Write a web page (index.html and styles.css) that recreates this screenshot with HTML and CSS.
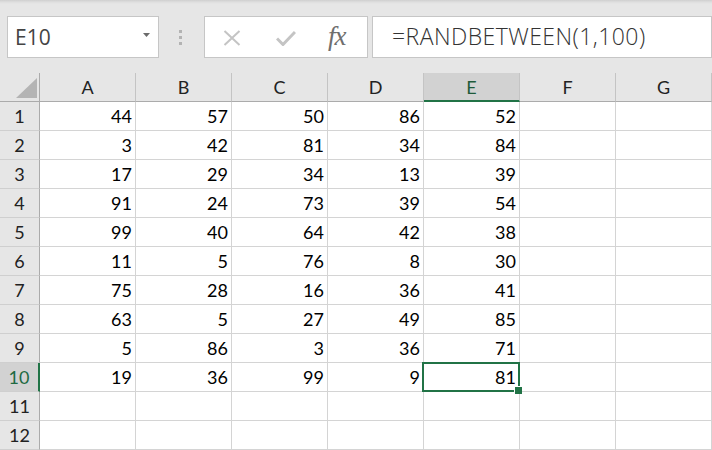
FILE: index.html
```html
<!DOCTYPE html>
<html>
<head>
<meta charset="utf-8">
<link rel="stylesheet" href="styles.css">
</head>
<body>
<div class="app">
  <div class="toolbar">
    <div class="namebox">
      <span class="name">E10</span>
      <svg class="caret" width="7" height="4" viewBox="0 0 7 4"><path d="M0 0H7L3.5 4Z" fill="#6b6b6b"/></svg>
    </div>
    <div class="grip"><i></i><i></i><i></i></div>
    <div class="fbtns">
      <svg class="ico-x" width="18" height="16" viewBox="0 0 18 16"><path d="M1.5 1L16.5 15M16.5 1L1.5 15" stroke="#c4c4c4" stroke-width="2" fill="none"/></svg>
      <svg class="ico-ok" width="20" height="16" viewBox="0 0 20 16"><path d="M1 8.5L7 14.5L19 2" stroke="#c4c4c4" stroke-width="3" fill="none"/></svg>
      <span class="fx">fx</span>
    </div>
    <div class="formula">=RANDBETWEEN(1,100)</div>
  </div>
  <div class="sheet">
    <div class="corner"><svg width="21" height="20" viewBox="0 0 21 20"><path d="M21 0V20H0Z" fill="#b4b4b4"/></svg></div>
    <div class="ch">A</div><div class="ch">B</div><div class="ch">C</div><div class="ch">D</div><div class="ch sel">E</div><div class="ch">F</div><div class="ch">G</div>

    <div class="rh">1</div><div class="c">44</div><div class="c">57</div><div class="c">50</div><div class="c">86</div><div class="c">52</div><div class="c"></div><div class="c"></div>
    <div class="rh">2</div><div class="c">3</div><div class="c">42</div><div class="c">81</div><div class="c">34</div><div class="c">84</div><div class="c"></div><div class="c"></div>
    <div class="rh">3</div><div class="c">17</div><div class="c">29</div><div class="c">34</div><div class="c">13</div><div class="c">39</div><div class="c"></div><div class="c"></div>
    <div class="rh">4</div><div class="c">91</div><div class="c">24</div><div class="c">73</div><div class="c">39</div><div class="c">54</div><div class="c"></div><div class="c"></div>
    <div class="rh">5</div><div class="c">99</div><div class="c">40</div><div class="c">64</div><div class="c">42</div><div class="c">38</div><div class="c"></div><div class="c"></div>
    <div class="rh">6</div><div class="c">11</div><div class="c">5</div><div class="c">76</div><div class="c">8</div><div class="c">30</div><div class="c"></div><div class="c"></div>
    <div class="rh">7</div><div class="c">75</div><div class="c">28</div><div class="c">16</div><div class="c">36</div><div class="c">41</div><div class="c"></div><div class="c"></div>
    <div class="rh">8</div><div class="c">63</div><div class="c">5</div><div class="c">27</div><div class="c">49</div><div class="c">85</div><div class="c"></div><div class="c"></div>
    <div class="rh">9</div><div class="c">5</div><div class="c">86</div><div class="c">3</div><div class="c">36</div><div class="c">71</div><div class="c"></div><div class="c"></div>
    <div class="rh sel">10</div><div class="c">19</div><div class="c">36</div><div class="c">99</div><div class="c">9</div><div class="c active">81</div><div class="c"></div><div class="c"></div>
    <div class="rh">11</div><div class="c"></div><div class="c"></div><div class="c"></div><div class="c"></div><div class="c"></div><div class="c"></div><div class="c"></div>
    <div class="rh">12</div><div class="c"></div><div class="c"></div><div class="c"></div><div class="c"></div><div class="c"></div><div class="c"></div><div class="c"></div>
  </div>
</div>
</body>
</html>
```

FILE: styles.css
```css
* { box-sizing: border-box; }
html, body { margin: 0; padding: 0; }
body {
  width: 712px;
  height: 450px;
  overflow: hidden;
  background: #ffffff;
  font-family: "Lato", "Liberation Sans", sans-serif;
}
.app { width: 712px; }

.toolbar {
  height: 73px;
  display: flex;
  align-items: flex-start;
  padding: 16px 0 0 7px;
  background: linear-gradient(#cfcfcf 0, #dedede 2px, #e6e6e6 4px, #e6e6e6 100%);
}
.namebox {
  width: 152px;
  height: 42px;
  background: #fff;
  border: 1px solid #c6c6c6;
  display: flex;
  align-items: center;
  justify-content: space-between;
  padding: 0 8px 0 7px;
}
.name {
  font-family: "Open Sans", "Noto Sans", sans-serif;
  font-size: 21px;
  color: #444;
  line-height: 40px;
}
.caret { margin-top: -4px; }
.grip {
  width: 3px;
  margin: 14px 22px 0 20px;
  display: flex;
  flex-direction: column;
  gap: 3px;
}
.grip i {
  display: block;
  width: 3px;
  height: 3px;
  background: #b3b3b3;
}
.fbtns {
  width: 164px;
  height: 42px;
  background: #fff;
  border: 1px solid #c6c6c6;
  display: flex;
  align-items: center;
  padding-left: 18px;
}
.ico-x { margin-right: 35px; margin-top: 2px; }
.ico-ok { margin-right: 32px; margin-top: 2px; }
.fx {
  font-family: "Liberation Serif", serif;
  font-style: italic;
  font-size: 27px;
  color: #6f6f6f;
  letter-spacing: -1px;
  line-height: 40px;
  margin-top: -2px;
}
.formula {
  flex: 1;
  height: 42px;
  margin-left: 4px;
  background: #fff;
  border: 1px solid #c6c6c6;
  padding-left: 19px;
  font-family: "Open Sans", "Noto Sans", sans-serif;
  font-size: 23px;
  font-weight: 300;
  letter-spacing: 0.45px;
  line-height: 38px;
  color: #333;
  white-space: nowrap;
}

.sheet {
  display: grid;
  grid-template-columns: 40px repeat(7, 96px);
  grid-auto-rows: 29px;
}
.corner {
  background: #e6e6e6;
  border-right: 1px solid #ababab;
  border-bottom: 1px solid #ababab;
  display: flex;
  align-items: flex-end;
  justify-content: flex-end;
  padding: 0 2px 3px 0;
}
.corner svg { display: block; }
.ch {
  background: #e6e6e6;
  border-right: 1px solid #c4c4c4;
  border-bottom: 1px solid #ababab;
  text-align: center;
  font-size: 18px;
  line-height: 28px;
  color: #222;
}
.ch.sel {
  background: #d2d2d2;
  border-bottom: 2px solid #217346;
  color: #1e5a3a;
}
.rh {
  background: #e6e6e6;
  border-right: 1px solid #ababab;
  border-bottom: 1px solid #cfcfcf;
  text-align: center;
  font-size: 18px;
  line-height: 29px;
  color: #222;
}
.rh.sel {
  background: #d2d2d2;
  border-right: 2px solid #217346;
  color: #1e6a42;
}
.c {
  border-right: 1px solid #d4d4d4;
  border-bottom: 1px solid #d4d4d4;
  text-align: right;
  padding-right: 3px;
  font-size: 18px;
  line-height: 29px;
  color: #000;
}
.c.active { position: relative; }
.c.active::before {
  content: "";
  position: absolute;
  top: -1px;
  left: -2px;
  right: -1px;
  bottom: -1px;
  border: 2px solid #217346;
}
.c.active::after {
  content: "";
  position: absolute;
  right: -3px;
  bottom: -3px;
  width: 7px;
  height: 7px;
  background: #217346;
  border: 1px solid #fff;
  border-right: none;
  border-bottom: none;
}
```
